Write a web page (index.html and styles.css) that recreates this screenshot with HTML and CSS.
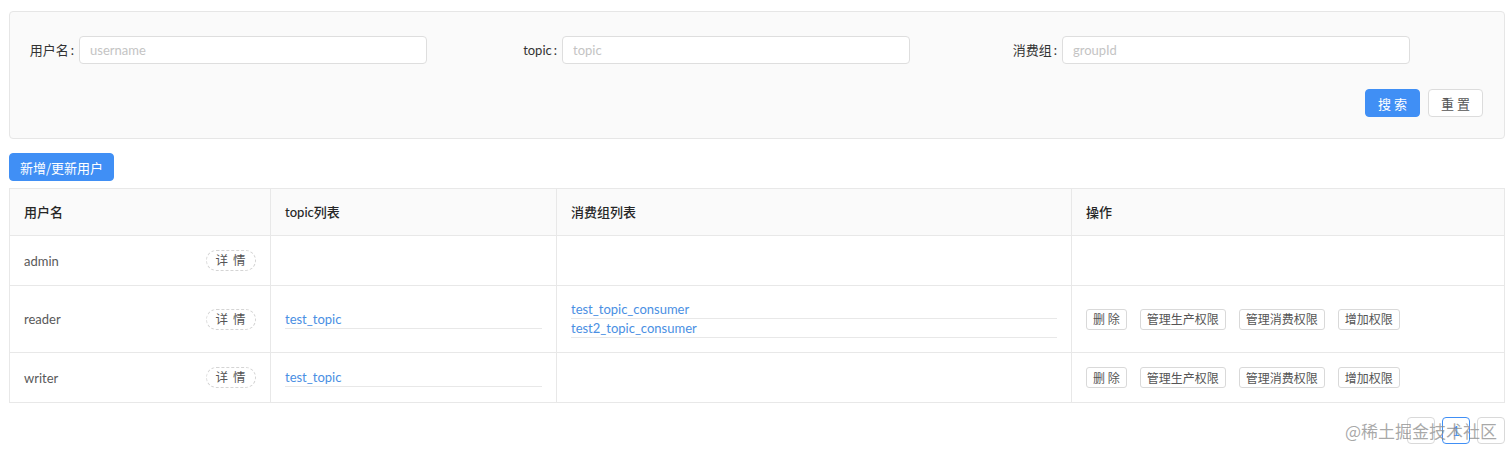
FILE: index.html
```html
<!DOCTYPE html>
<html lang="zh">
<head>
<meta charset="utf-8">
<title>用户管理</title>
<link rel="stylesheet" href="styles.css">
</head>
<body>
<div class="page">
  <div class="search-card">
    <div class="form-row">
      <div class="form-item">
        <label class="form-label">用户名<span class="colon">:</span></label>
        <input class="form-input" placeholder="username">
      </div>
      <div class="form-item">
        <label class="form-label">topic<span class="colon">:</span></label>
        <input class="form-input" placeholder="topic">
      </div>
      <div class="form-item">
        <label class="form-label">消费组<span class="colon">:</span></label>
        <input class="form-input" placeholder="groupId">
      </div>
    </div>
    <div class="form-actions">
      <button class="btn btn-primary btn-search">搜 索</button>
      <button class="btn btn-default btn-reset">重 置</button>
    </div>
  </div>

  <button class="btn btn-primary btn-add">新增/更新用户</button>

  <table class="data-table">
    <colgroup>
      <col class="col-user">
      <col class="col-topic">
      <col class="col-group">
      <col class="col-ops">
    </colgroup>
    <thead>
      <tr>
        <th>用户名</th>
        <th>topic列表</th>
        <th>消费组列表</th>
        <th>操作</th>
      </tr>
    </thead>
    <tbody>
      <tr>
        <td><div class="user-cell"><span>admin</span><button class="detail-btn">详 情</button></div></td>
        <td></td>
        <td></td>
        <td></td>
      </tr>
      <tr>
        <td><div class="user-cell"><span>reader</span><button class="detail-btn">详 情</button></div></td>
        <td><ul class="link-list"><li><a>test_topic</a></li></ul></td>
        <td><ul class="link-list"><li><a>test_topic_consumer</a></li><li><a>test2_topic_consumer</a></li></ul></td>
        <td><div class="ops"><button class="op-btn">删 除</button><button class="op-btn">管理生产权限</button><button class="op-btn">管理消费权限</button><button class="op-btn">增加权限</button></div></td>
      </tr>
      <tr>
        <td><div class="user-cell"><span>writer</span><button class="detail-btn">详 情</button></div></td>
        <td><ul class="link-list"><li><a>test_topic</a></li></ul></td>
        <td></td>
        <td><div class="ops"><button class="op-btn">删 除</button><button class="op-btn">管理生产权限</button><button class="op-btn">管理消费权限</button><button class="op-btn">增加权限</button></div></td>
      </tr>
    </tbody>
  </table>

  <div class="pagination">
    <span class="page-item"></span>
    <span class="page-item active">1</span>
    <span class="page-item"></span>
  </div>
</div>
<div class="watermark">@稀土掘金技术社区</div>
</body>
</html>
```

FILE: styles.css
```css
* { box-sizing: border-box; }

html, body {
  margin: 0;
  background: #fff;
}

body {
  font-family: "Lato", "Noto Sans CJK SC", sans-serif;
  font-size: 13px;
  color: #595959;
  width: 1512px;
  height: 452px;
  overflow: hidden;
  position: relative;
}

.page {
  padding: 11px 7px 0 9px;
}

.search-card {
  background: #fafafa;
  border: 1px solid #e6e6e6;
  border-radius: 4px;
  padding: 24px 21px 21px 15px;
}

.form-row {
  display: grid;
  grid-template-columns: 483px 500px 1fr;
}

.form-item {
  display: flex;
  align-items: center;
  height: 28px;
}

.form-label {
  width: 54px;
  padding-right: 5px;
  text-align: right;
  color: #333;
  font-family: "Lato", "Noto Sans CJK SC", sans-serif;
  font-size: 13px;
  white-space: nowrap;
  line-height: 18px;
}

.colon {
  margin-left: 2px;
}

.form-input {
  width: 348px;
  height: 28px;
  border: 1px solid #dedede;
  border-radius: 4px;
  background: #fff;
  padding: 0 10px;
  font-family: "Lato", "Noto Sans CJK SC", sans-serif;
  font-size: 13px;
  color: #333;
  outline: none;
}

.form-input::placeholder {
  color: #c4c4c4;
}

.form-actions {
  display: flex;
  justify-content: flex-end;
  gap: 8px;
  margin-top: 25px;
}

.btn {
  font-family: "Noto Sans CJK SC", sans-serif;
  font-size: 13px;
  height: 28px;
  border-radius: 4px;
  cursor: pointer;
  line-height: 1;
}

.btn-primary {
  background: #408ff5;
  border: 1px solid #408ff5;
  color: #fff;
}

.btn-default {
  background: #fff;
  border: 1px solid #dcdcdc;
  color: #555;
}

.btn-search,
.btn-reset {
  width: 55px;
  padding: 0;
}

.btn-add {
  display: block;
  margin: 14px 0 7px;
  width: 105px;
  padding: 0;
}

.data-table {
  width: 100%;
  border-collapse: collapse;
  table-layout: fixed;
  border: 1px solid #e8e8e8;
}

.col-user { width: 261px; }
.col-topic { width: 286px; }
.col-group { width: 515px; }

.data-table th,
.data-table td {
  border: 1px solid #e8e8e8;
  padding: 14px 14px;
  text-align: left;
  vertical-align: middle;
  line-height: 18px;
}

.data-table th {
  background: #fafafa;
  color: #262626;
  font-weight: 500;
  font-size: 13px;
}

.data-table td {
  height: 50px;
}

.user-cell {
  display: flex;
  justify-content: space-between;
  align-items: center;
}

.detail-btn {
  width: 50px;
  height: 21px;
  border: 1px dashed #d4d4d4;
  border-radius: 11px;
  background: #fff;
  color: #555;
  font-family: "Noto Sans CJK SC", sans-serif;
  font-size: 12.5px;
  letter-spacing: 1px;
  padding: 0;
  line-height: 1;
}

.link-list {
  list-style: none;
  margin: 0;
  padding: 0;
}

.link-list li {
  border-bottom: 1px solid #e8e8e8;
  line-height: 18px;
}

.link-list a {
  color: #4a8fe3;
  font-size: 13px;
}

.ops {
  display: flex;
  gap: 13px;
}

.op-btn {
  height: 21px;
  padding: 0 6px;
  border: 1px solid #d9d9d9;
  border-radius: 3px;
  background: #fff;
  color: #555;
  font-family: "Noto Sans CJK SC", sans-serif;
  font-size: 12px;
  line-height: 1;
}

.pagination {
  display: flex;
  justify-content: flex-end;
  gap: 7px;
  margin-top: 14px;
}

.page-item {
  width: 28px;
  height: 27px;
  border: 1px solid #d9d9d9;
  border-radius: 4px;
  display: flex;
  align-items: center;
  justify-content: center;
  font-size: 13px;
  color: #595959;
  background: #fff;
}

.page-item.active {
  border-color: #408ff5;
  color: #408ff5;
}

.watermark {
  position: absolute;
  right: 15px;
  bottom: 9px;
  font-family: "Noto Sans CJK SC", sans-serif;
  font-size: 17px;
  line-height: 24px;
  color: rgba(140, 140, 140, 0.75);
  letter-spacing: 0;
  pointer-events: none;
}
```
